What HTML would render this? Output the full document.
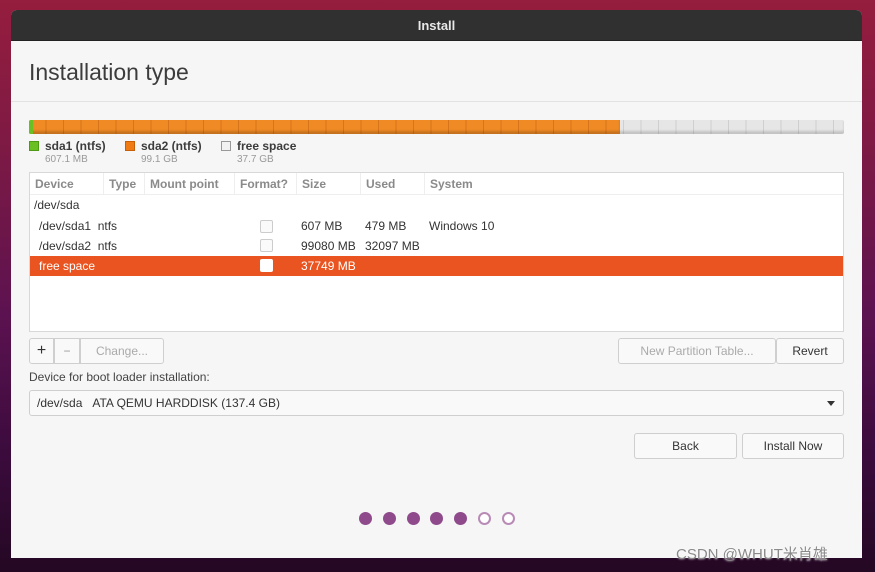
<!DOCTYPE html>
<html><head><meta charset="utf-8"><style>
*{box-sizing:border-box;margin:0;padding:0}
body{width:875px;height:572px;overflow:hidden;font-family:"Liberation Sans","Noto Sans CJK SC",sans-serif;background:linear-gradient(180deg,#951d3e 0%,#7e1a44 25%,#5c1250 55%,#3a0b3c 80%,#240823 100%);position:relative}
.win{position:absolute;left:11px;top:10px;width:851px;height:548px;background:#f6f6f6;border-radius:6px 6px 0 0;overflow:hidden}
.tb{height:31px;background:#303030;color:#e8e8e8;font-weight:bold;font-size:13px;text-align:center;line-height:31px;border-bottom:1px solid #222}
.abs{position:absolute}
h1{position:absolute;left:18px;top:49px;font-size:23px;font-weight:normal;color:#3c3c3c}
.sep{position:absolute;left:0;top:91px;width:851px;height:1px;background:#e2e2e2}
.bar{position:absolute;left:18px;top:110px;width:815px;height:14px;border-radius:2px;overflow:hidden;background:repeating-linear-gradient(90deg,#e6e6e6 0 16.5px,#cfcfcf 16.5px 17.5px);box-shadow:inset 0 -3px 2px rgba(0,0,0,.15)}
.or{position:absolute;left:0;top:0;width:591px;height:14px;background:repeating-linear-gradient(90deg,#f08a24 0 16.5px,#d8741a 16.5px 17.5px);box-shadow:inset 0 -3px 2px rgba(0,0,0,.18)}
.gr{position:absolute;left:0;top:0;width:4px;height:14px;background:#6ac023}
.lg{position:absolute;top:129px;font-size:12px;font-weight:bold;color:#3c3c3c}
.lg i{display:inline-block;width:10px;height:10px;margin-right:6px;vertical-align:-1px}
.lg small{display:block;font-weight:normal;font-size:10px;color:#999;margin-left:16px;margin-top:1px}
.tbl{position:absolute;left:18px;top:162px;width:815px;height:160px;background:#fff;border:1px solid #d8d8d8}
.th{height:22px;border-bottom:1px solid #eee;font-size:12px;color:#8a8a8a;font-weight:bold;position:relative}
.th span{position:absolute;padding-left:5px;border-right:1px solid #eee;height:22px;top:0;line-height:22px}
.r{position:absolute;font-size:12px;color:#333;height:20px;line-height:20px}
.cb{position:absolute;width:13px;height:13px;border:1px solid #ccc;border-radius:2px;background:#fafafa}
.btn{position:absolute;height:26px;border:1px solid #cfcfcf;border-radius:3px;background:#f9f9f9;font-size:12px;color:#333;text-align:center;line-height:24px}
.dot{position:absolute;top:502px;width:13px;height:13px;border-radius:50%;background:#8f4a8c}
.dot.o{background:#fff;border:2px solid #b88bb6}
</style></head><body>
<div class="win">
<div class="tb">Install</div>
<h1>Installation type</h1>
<div class="sep"></div>
<div class="bar"><div class="or"></div><div class="gr"></div></div>
<div class="lg" style="left:18px"><i style="background:#6ac023;border:1px solid #4d9a14"></i>sda1 (ntfs)<small>607.1 MB</small></div>
<div class="lg" style="left:114px"><i style="background:#f07b12;border:1px solid #c65f08"></i>sda2 (ntfs)<small>99.1 GB</small></div>
<div class="lg" style="left:210px"><i style="background:#f2f2f2;border:1px solid #999"></i>free space<small>37.7 GB</small></div>
<div class="tbl">
<div class="th"><span style="left:0;width:74px">Device</span><span style="left:74px;width:41px">Type</span><span style="left:115px;width:90px">Mount point</span><span style="left:205px;width:62px">Format?</span><span style="left:267px;width:64px">Size</span><span style="left:331px;width:64px">Used</span><span style="left:395px;width:80px;border:none">System</span></div>
<div class="r" style="left:4px;top:22px">/dev/sda</div>
<div class="r" style="left:9px;top:43px">/dev/sda1&nbsp; ntfs</div>
<div class="cb" style="left:230px;top:47px"></div>
<div class="r" style="left:271px;top:43px">607 MB</div><div class="r" style="left:335px;top:43px">479 MB</div><div class="r" style="left:399px;top:43px">Windows 10</div>
<div class="r" style="left:9px;top:63px">/dev/sda2&nbsp; ntfs</div>
<div class="cb" style="left:230px;top:66px"></div>
<div class="r" style="left:271px;top:63px">99080 MB</div><div class="r" style="left:335px;top:63px">32097 MB</div>
<div class="abs" style="left:0;top:83px;width:813px;height:20px;background:#e95420"></div>
<div class="r" style="left:9px;top:83px;color:#fff">free space</div>
<div class="cb" style="left:230px;top:86px;background:#fff;border-color:#fff"></div>
<div class="r" style="left:271px;top:83px;color:#fff">37749 MB</div>
</div>
<div class="btn" style="left:18px;top:328px;width:25px;border-radius:3px 0 0 3px;font-size:16px">+</div>
<div class="btn" style="left:43px;top:328px;width:26px;border-radius:0;color:#999">−</div>
<div class="btn" style="left:69px;top:328px;width:84px;border-radius:0 3px 3px 0;color:#aaa">Change...</div>
<div class="btn" style="left:607px;top:328px;width:158px;color:#aaa">New Partition Table...</div>
<div class="btn" style="left:765px;top:328px;width:68px">Revert</div>
<div class="abs" style="left:18px;top:360px;font-size:12px;color:#444">Device for boot loader installation:</div>
<div class="btn" style="left:18px;top:380px;width:815px;text-align:left;padding-left:7px">/dev/sda&nbsp;&nbsp;&nbsp;ATA QEMU HARDDISK (137.4 GB)<span style="position:absolute;right:8px;top:10px;border:4px solid transparent;border-top:5px solid #333"></span></div>
<div class="btn" style="left:623px;top:423px;width:103px">Back</div>
<div class="btn" style="left:731px;top:423px;width:102px">Install Now</div>
<div class="dot" style="left:348px"></div><div class="dot" style="left:372px"></div><div class="dot" style="left:396px"></div><div class="dot" style="left:419px"></div><div class="dot" style="left:443px"></div><div class="dot o" style="left:467px"></div><div class="dot o" style="left:491px"></div>
</div>
<div class="abs" style="left:676px;top:543px;font-size:15px;color:#8a8a8a;text-shadow:0 0 2px #fff">CSDN @WHUT米肖雄</div>
</body></html>
